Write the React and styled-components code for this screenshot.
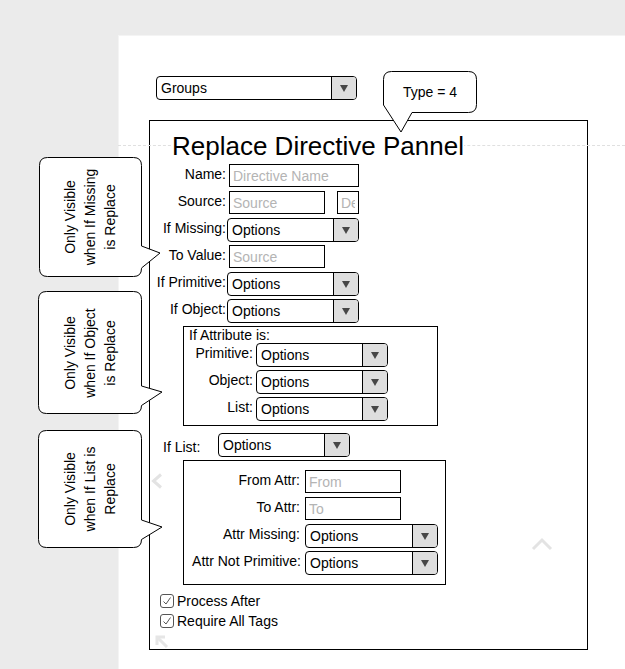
import React from 'react';
import styled, { createGlobalStyle } from 'styled-components';

const GlobalStyle = createGlobalStyle`
  html, body {
    margin: 0;
    padding: 0;
    background: #ebebeb;
  }
  body {
    font-family: "Liberation Sans", Arial, Helvetica, sans-serif;
    font-size: 14px;
    color: #000;
  }
  * {
    box-sizing: border-box;
  }
`;

const Screen = styled.div`
  position: relative;
  display: flex;
  width: 625px;
  height: 669px;
  overflow: hidden;
  background: #ebebeb;
`;

const Gutter = styled.div`
  flex: 0 0 118px;
`;

const Canvas = styled.div`
  flex: 1;
  margin-top: 35px;
  padding: 36px 0 0 31px;
  background: #fff;
  box-shadow: inset 1px 1px 0 #f4f4f4;
`;

const Guide = styled.div`
  position: absolute;
  left: 118px;
  right: 0;
  top: 145px;
  border-top: 1px dashed #e0e0e0;
`;

const TopRow = styled.div`
  display: flex;
  align-items: flex-start;
  gap: 26px;
  padding-left: 7px;
`;

const SelectBox = styled.div`
  display: flex;
  flex: none;
  width: ${p => p.$width}px;
  height: 24px;
  margin-top: ${p => p.$top || 0}px;
  border: 1px solid #000;
  border-radius: 4px;
  background: #fff;
  overflow: hidden;
`;

const SelectValue = styled.span`
  flex: 1;
  padding-left: 4px;
  line-height: 22px;
  white-space: nowrap;
`;

const SelectArrow = styled.span`
  display: flex;
  flex: 0 0 25px;
  align-items: center;
  justify-content: center;
  border-left: 1px solid #000;
  background: #dedede;

  &::after {
    content: '';
    border-left: 4.5px solid transparent;
    border-right: 4.5px solid transparent;
    border-top: 7px solid #474747;
  }
`;

const TextInput = styled.input`
  display: block;
  width: ${p => p.$width}px;
  height: 23px;
  margin: 0 0 0 ${p => p.$offset ?? 2}px;
  padding: 0 3px;
  border: 1px solid #000;
  border-radius: 0;
  background: #fff;
  font: inherit;
  color: #000;
  outline: none;

  &::placeholder {
    color: #b4b4b4;
    opacity: 1;
  }
`;

const Panel = styled.section`
  width: 439px;
  height: 530px;
  margin-top: 7px;
  border: 1px solid #000;
`;

const Title = styled.h1`
  position: relative;
  z-index: 1;
  width: fit-content;
  margin: 10px 0 0 22px;
  background: #fff;
  font-size: 26px;
  font-weight: normal;
  line-height: 30px;
  white-space: nowrap;
`;

const FormGrid = styled.div`
  display: grid;
  grid-template-columns: ${p => p.$label}px auto;
  grid-auto-rows: 24px;
  column-gap: ${p => p.$gap || 0}px;
  row-gap: 3px;
  justify-content: start;
  margin-top: ${p => p.$top || 0}px;
`;

const Label = styled.span`
  padding: 2px ${p => p.$pad ?? 1}px 0 0;
  line-height: 16px;
  text-align: right;
  white-space: nowrap;
`;

const Pair = styled.div`
  display: flex;
  gap: 12px;
`;

const GroupBox = styled.div`
  width: ${p => p.$width}px;
  margin: ${p => p.$top}px 0 0 33px;
  padding: ${p => p.$pad || 0}px 0;
  padding-bottom: ${p => p.$bottom ?? p.$pad ?? 0}px;
  border: 1px solid #000;
`;

const BoxTitle = styled.div`
  padding-left: 5px;
  line-height: 16px;
`;

const InlineRow = styled.div`
  display: flex;
  align-items: flex-start;
  margin-top: 7px;
  padding-left: 13px;
`;

const InlineLabel = styled.span`
  flex: 0 0 55px;
  padding-top: 6px;
  line-height: 16px;
`;

const Checks = styled.div`
  display: flex;
  flex-direction: column;
  gap: 4px;
  margin-top: 8px;
  padding-left: 10px;
`;

const CheckRow = styled.label`
  display: flex;
  align-items: center;
  gap: 3px;
  line-height: 16px;
`;

const Box = styled.span`
  display: flex;
  width: 14px;
  height: 14px;
  border: 1px solid #555;
  border-radius: 3px;
  background: #fff;
`;

const Bubble = styled.div`
  position: relative;
  z-index: 2;
  display: flex;
  flex: none;
  align-items: center;
  justify-content: center;
  width: ${p => p.$w}px;
  height: ${p => p.$h}px;
`;

const FloatingBubble = styled(Bubble)`
  position: absolute;
  left: ${p => p.$x}px;
  top: ${p => p.$y}px;
`;

const BubbleShape = styled.svg`
  position: absolute;
  left: 0;
  top: 0;
  overflow: visible;
`;

const BubbleText = styled.div`
  position: relative;
  line-height: 20px;
  text-align: center;
  white-space: nowrap;
  transform: ${p => (p.$vertical ? 'rotate(-90deg)' : 'none')};
`;

const Mark = styled.svg`
  position: absolute;
  left: ${p => p.$x}px;
  top: ${p => p.$y}px;
  z-index: 3;
  overflow: visible;
`;

// bubble with its tail on the right side
const sidePath = (w, h, r, t1, tx, ty, t2) => {
  const L = 0.5, T = 0.5, R = w - 0.5, B = h - 0.5;
  const low = Math.min(t2, B - r);
  return `M${L + r} ${T} H${R - r} Q${R} ${T} ${R} ${T + r} V${t1} L${tx} ${ty} L${R} ${low} V${B - r} Q${R} ${B} ${R - r} ${B} H${L + r} Q${L} ${B} ${L} ${B - r} V${T + r} Q${L} ${T} ${L + r} ${T} Z`;
};

// bubble with its tail hanging from the bottom left corner
const bottomPath = (w, h, r, tailX, tx, ty, tailY) => {
  const L = 0.5, T = 0.5, R = w - 0.5, B = h - 0.5;
  return `M${L + r} ${T} H${R - r} Q${R} ${T} ${R} ${T + r} V${B - r} Q${R} ${B} ${R - r} ${B} H${tailX} L${tx} ${ty} L${L} ${tailY} V${T + r} Q${L} ${T} ${L + r} ${T} Z`;
};

const Shape = ({ w, h, d }) => (
  <BubbleShape width={w} height={h}>
    <path d={d} fill="#fff" stroke="#000" strokeWidth="1" />
  </BubbleShape>
);

const Select = ({ width, value = 'Options', top }) => (
  <SelectBox $width={width} $top={top}>
    <SelectValue>{value}</SelectValue>
    <SelectArrow />
  </SelectBox>
);

const Checkbox = ({ children }) => (
  <CheckRow>
    <Box>
      <svg width="12" height="12" viewBox="0 0 12 12">
        <polyline points="2.5,6.5 5,9 9.5,2.5" fill="none" stroke="#555" strokeWidth="1" />
      </svg>
    </Box>
    {children}
  </CheckRow>
);

const sideNotes = [
  { x: 39, y: 157, w: 103, h: 120, tail: [89, 121, 96, 111], lines: ['Only Visible', 'when If Missing', 'is Replace'] },
  { x: 38, y: 291, w: 104, h: 123, tail: [95, 124, 101, 117], lines: ['Only Visible', 'when If Object', 'is Replace'] },
  { x: 38, y: 430, w: 104, h: 118, tail: [90, 124, 97, 110], lines: ['Only Visible', 'when If List is', 'Replace'] },
];

const App = () => (
  <>
    <GlobalStyle />
    <Screen>
      <Gutter />
      <Canvas>
        <TopRow>
          <Select width={201} value="Groups" top={5} />
          <Bubble $w={94} $h={42}>
            <Shape w={94} h={42} d={bottomPath(94, 42, 8, 29, 18, 61, 34)} />
            <BubbleText>Type = 4</BubbleText>
          </Bubble>
        </TopRow>

        <Panel>
          <Title>Replace Directive Pannel</Title>

          <FormGrid $label={77} $top={3}>
            <Label>Name:</Label>
            <TextInput $width={130} placeholder="Directive Name" readOnly />
            <Label>Source:</Label>
            <Pair>
              <TextInput $width={96} placeholder="Source" readOnly />
              <TextInput $width={22} $offset={0} placeholder="Default" readOnly />
            </Pair>
            <Label>If Missing:</Label>
            <Select width={132} />
            <Label>To Value:</Label>
            <TextInput $width={96} placeholder="Source" readOnly />
            <Label>If Primitive:</Label>
            <Select width={132} />
            <Label>If Object:</Label>
            <Select width={132} />
          </FormGrid>

          <GroupBox $width={255} $top={3} $bottom={4}>
            <BoxTitle>If Attribute is:</BoxTitle>
            <FormGrid $label={69} $gap={3}>
              <Label $pad={0}>Primitive:</Label>
              <Select width={132} />
              <Label $pad={0}>Object:</Label>
              <Select width={132} />
              <Label $pad={0}>List:</Label>
              <Select width={132} />
            </FormGrid>
          </GroupBox>

          <InlineRow>
            <InlineLabel>If List:</InlineLabel>
            <Select width={132} />
          </InlineRow>

          <GroupBox $width={263} $top={3} $pad={9}>
            <FormGrid $label={118} $gap={3}>
              <Label $pad={2}>From Attr:</Label>
              <TextInput $width={96} $offset={0} placeholder="From" readOnly />
              <Label $pad={2}>To Attr:</Label>
              <TextInput $width={96} $offset={0} placeholder="To" readOnly />
              <Label $pad={2}>Attr Missing:</Label>
              <Select width={133} />
              <Label $pad={1}>Attr Not Primitive:</Label>
              <Select width={133} />
            </FormGrid>
          </GroupBox>

          <Checks>
            <Checkbox>Process After</Checkbox>
            <Checkbox>Require All Tags</Checkbox>
          </Checks>
        </Panel>
      </Canvas>

      <Guide />

      {sideNotes.map(note => (
        <FloatingBubble key={note.y} $x={note.x} $y={note.y} $w={note.w} $h={note.h}>
          <Shape w={note.w} h={note.h} d={sidePath(note.w, note.h, 8, ...note.tail)} />
          <BubbleText $vertical>
            {note.lines.map(line => (
              <div key={line}>{line}</div>
            ))}
          </BubbleText>
        </FloatingBubble>
      ))}

      <Mark $x={152} $y={474} width="10" height="14">
        <polyline points="9,0.5 1.5,7 9,13.5" fill="none" stroke="#e3e3e3" strokeWidth="3" />
      </Mark>
      <Mark $x={532} $y={538} width="20" height="12">
        <polyline points="1,11 10,2 19,11" fill="none" stroke="#e3e3e3" strokeWidth="3" />
      </Mark>
      <Mark $x={155} $y={635} width="12" height="12">
        <polyline points="2,10 2,2 10,2" fill="none" stroke="#e6e6e6" strokeWidth="3" />
        <line x1="3" y1="3" x2="12" y2="12" stroke="#e6e6e6" strokeWidth="3" />
      </Mark>
    </Screen>
  </>
);

export default App;
